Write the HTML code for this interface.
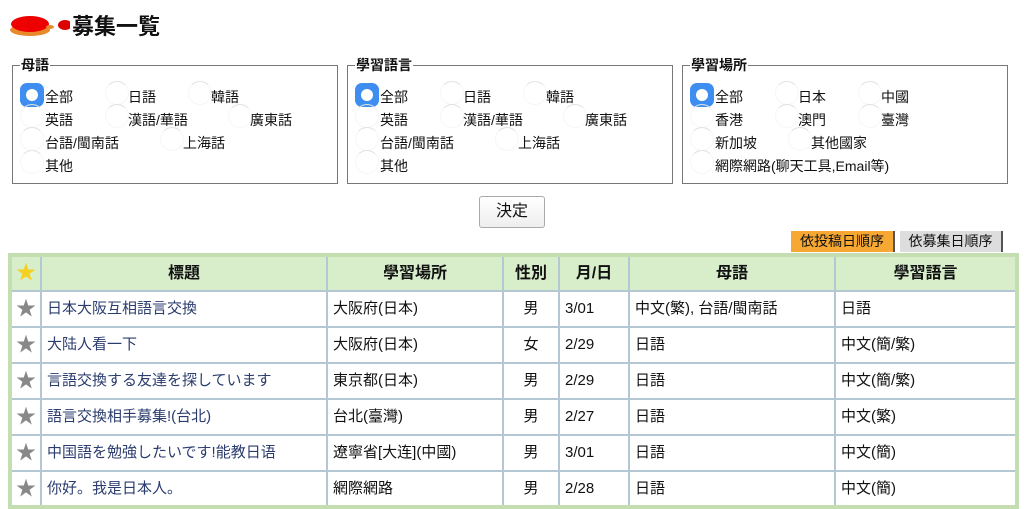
<!DOCTYPE html>
<html><head><meta charset="utf-8"><style>
*{box-sizing:border-box}
body{margin:0;width:1024px;height:508px;overflow:hidden;background:#fff;font-family:"Liberation Sans","Noto Sans CJK JP",sans-serif;font-size:14px;color:#111;position:relative}
.a{position:absolute;white-space:nowrap}
.fs{position:absolute;top:65px;width:326px;height:119px;border:1px solid #777}
.lg{position:absolute;top:-10px;left:7px;background:#fff;font-weight:bold;font-size:14px;padding:0 1px;line-height:18px}
.r{position:absolute;width:24px;height:24px;border-radius:50%;border:1px solid #f6f6f6;border-top-color:#e2e2e2}
.r.on{background:#3d8ef0;border:none;border-radius:7px}
.r.on:after{content:"";position:absolute;left:6px;top:6px;width:12px;height:12px;border-radius:50%;background:#fff}
.t{position:absolute;font-size:14px;line-height:16px;white-space:nowrap}
table{position:absolute;left:8px;top:253px;border-collapse:collapse;border:4px solid #c4deb2;width:1011px}
td,th{border:2px solid #b4c8d4;height:36px;font-size:15px;padding:0 5px;white-space:nowrap;vertical-align:middle;line-height:20px}
th{background:#d8eecb;font-weight:bold;height:36px;font-size:16px}
td.c{text-align:center}
td.l{color:#2b3c6e}
.st{width:31px;text-align:center;padding:0}
</style></head><body>
<svg class="a" style="left:6px;top:12px" width="64" height="26"><ellipse cx="24" cy="18" rx="20" ry="6" fill="#e8892c"/><ellipse cx="24" cy="12" rx="19" ry="8" fill="#e00"/><ellipse cx="44" cy="15" rx="4" ry="2" fill="#e8892c"/><ellipse cx="59" cy="13" rx="7" ry="5" fill="#d00"/></svg>
<div class="a" style="left:72px;top:13px;font-size:22px;font-weight:bold;line-height:28px">募集一覧</div>

<div class="fs" style="left:12px"><div class="lg">母語</div>
<div class="r on" style="left:7px;top:17px"></div><div class="t" style="left:32px;top:23px">全部</div>
<div class="r" style="left:92px;top:15px"></div><div class="t" style="left:115px;top:23px">日語</div>
<div class="r" style="left:175px;top:15px"></div><div class="t" style="left:198px;top:23px">韓語</div>
<div class="r" style="left:7px;top:38px"></div><div class="t" style="left:32px;top:46px">英語</div>
<div class="r" style="left:92px;top:38px"></div><div class="t" style="left:115px;top:46px">漢語/華語</div>
<div class="r" style="left:215px;top:38px"></div><div class="t" style="left:237px;top:46px">廣東話</div>
<div class="r" style="left:7px;top:61px"></div><div class="t" style="left:32px;top:69px">台語/閩南話</div>
<div class="r" style="left:147px;top:61px"></div><div class="t" style="left:170px;top:69px">上海話</div>
<div class="r" style="left:7px;top:84px"></div><div class="t" style="left:32px;top:92px">其他</div>
</div>
<div class="fs" style="left:347px"><div class="lg">學習語言</div>
<div class="r on" style="left:7px;top:17px"></div><div class="t" style="left:32px;top:23px">全部</div>
<div class="r" style="left:92px;top:15px"></div><div class="t" style="left:115px;top:23px">日語</div>
<div class="r" style="left:175px;top:15px"></div><div class="t" style="left:198px;top:23px">韓語</div>
<div class="r" style="left:7px;top:38px"></div><div class="t" style="left:32px;top:46px">英語</div>
<div class="r" style="left:92px;top:38px"></div><div class="t" style="left:115px;top:46px">漢語/華語</div>
<div class="r" style="left:215px;top:38px"></div><div class="t" style="left:237px;top:46px">廣東話</div>
<div class="r" style="left:7px;top:61px"></div><div class="t" style="left:32px;top:69px">台語/閩南話</div>
<div class="r" style="left:147px;top:61px"></div><div class="t" style="left:170px;top:69px">上海話</div>
<div class="r" style="left:7px;top:84px"></div><div class="t" style="left:32px;top:92px">其他</div>
</div>
<div class="fs" style="left:682px"><div class="lg">學習場所</div>
<div class="r on" style="left:7px;top:17px"></div><div class="t" style="left:32px;top:23px">全部</div>
<div class="r" style="left:92px;top:15px"></div><div class="t" style="left:115px;top:23px">日本</div>
<div class="r" style="left:175px;top:15px"></div><div class="t" style="left:198px;top:23px">中國</div>
<div class="r" style="left:7px;top:38px"></div><div class="t" style="left:32px;top:46px">香港</div>
<div class="r" style="left:92px;top:38px"></div><div class="t" style="left:115px;top:46px">澳門</div>
<div class="r" style="left:175px;top:38px"></div><div class="t" style="left:198px;top:46px">臺灣</div>
<div class="r" style="left:7px;top:61px"></div><div class="t" style="left:32px;top:69px">新加坡</div>
<div class="r" style="left:105px;top:61px"></div><div class="t" style="left:128px;top:69px">其他國家</div>
<div class="r" style="left:7px;top:84px"></div><div class="t" style="left:32px;top:92px">網際網路(聊天工具,Email等)</div>
</div>

<div class="a" style="left:479px;top:196px;width:66px;height:32px;border:1px solid #aaa;border-radius:3px;background:linear-gradient(#fff,#eee);text-align:center;line-height:30px;font-size:16px">決定</div>
<div class="a" style="left:791px;top:231px;width:104px;height:21px;background:#f6a832;border-right:2px solid #555;text-align:center;line-height:21px;font-size:14px">依投稿日順序</div>
<div class="a" style="left:900px;top:231px;width:103px;height:21px;background:#ddd;border-right:2px solid #555;text-align:center;line-height:21px;font-size:14px">依募集日順序</div>

<table>
<tr><th class="st"><span style="color:#f4d020;font-size:20px">★</span></th><th style="width:286px">標題</th><th style="width:176px">學習場所</th><th style="width:56px">性別</th><th style="width:70px">月/日</th><th style="width:206px">母語</th><th>學習語言</th></tr>
<tr><td class="st" style="color:#888;font-size:20px">★</td><td class="l">日本大阪互相語言交換</td><td>大阪府(日本)</td><td class="c">男</td><td>3/01</td><td>中文(繁), 台語/閩南話</td><td>日語</td></tr>
<tr><td class="st" style="color:#888;font-size:20px">★</td><td class="l">大陆人看一下</td><td>大阪府(日本)</td><td class="c">女</td><td>2/29</td><td>日語</td><td>中文(簡/繁)</td></tr>
<tr><td class="st" style="color:#888;font-size:20px">★</td><td class="l">言語交換する友達を探しています</td><td>東京都(日本)</td><td class="c">男</td><td>2/29</td><td>日語</td><td>中文(簡/繁)</td></tr>
<tr><td class="st" style="color:#888;font-size:20px">★</td><td class="l">語言交換相手募集!(台北)</td><td>台北(臺灣)</td><td class="c">男</td><td>2/27</td><td>日語</td><td>中文(繁)</td></tr>
<tr><td class="st" style="color:#888;font-size:20px">★</td><td class="l">中国語を勉強したいです!能教日语</td><td>遼寧省[大连](中國)</td><td class="c">男</td><td>3/01</td><td>日語</td><td>中文(簡)</td></tr>
<tr><td class="st" style="color:#888;font-size:20px">★</td><td class="l">你好。我是日本人。</td><td>網際網路</td><td class="c">男</td><td>2/28</td><td>日語</td><td>中文(簡)</td></tr>
</table>
</body></html>
